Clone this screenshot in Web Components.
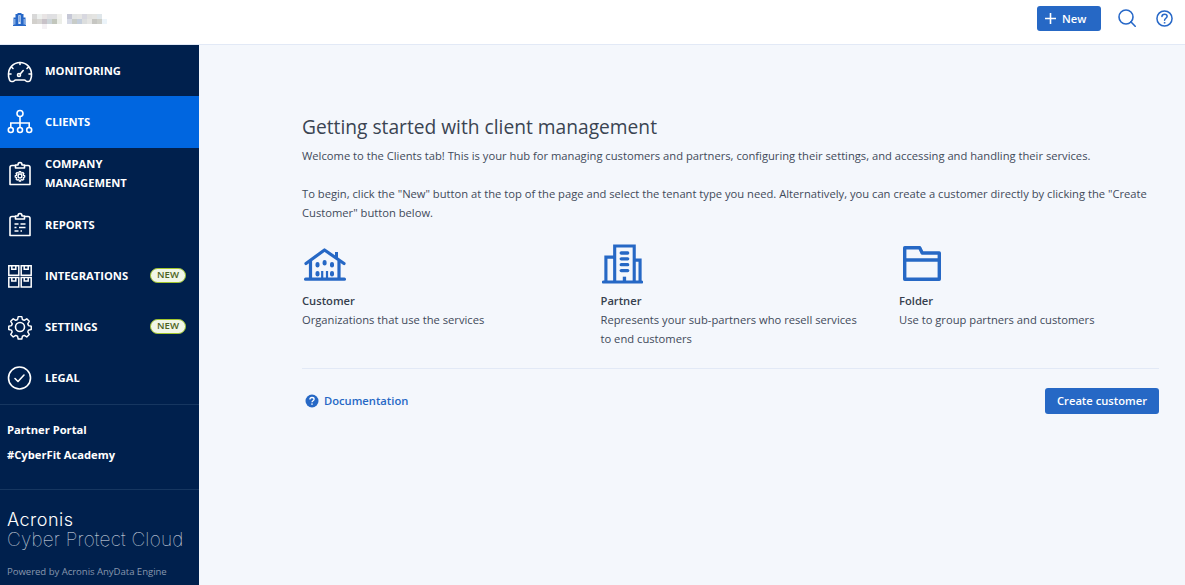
<!DOCTYPE html>
<html lang="en">
<head>
<meta charset="utf-8">
<title>Clients</title>
<style>
html,body{margin:0;padding:0;height:100%;overflow:hidden}
body{font-family:"Open Sans","Noto Sans",sans-serif;background:#f4f7fc}
</style>
</head>
<body>
<template id="t-shell">
<style>
:host{display:grid;grid-template-columns:199px 1fr;grid-template-rows:45px 1fr;width:1185px;height:585px;overflow:hidden}
::slotted(app-header){grid-column:1 / 3}
</style>
<slot></slot>
</template>

<template id="t-header">
<style>
:host{display:flex;align-items:center;background:#fff;border-bottom:1px solid #e2e9f6;box-sizing:border-box;height:45px;padding:0 12px 8px 13px}
.tenant{width:13px;height:13px;margin-right:6px;margin-top:3px}
.blur{display:grid;grid-template-columns:repeat(15,5px);grid-auto-rows:5px;margin-top:7px}
.blur i{display:block}
.sp{flex:1}
.s{margin-left:17px;width:18px;height:18px;display:block}
.h{margin-left:20px;width:17px;height:17px;display:block}
.add{width:15px;height:15px;margin-right:4px}
</style>
<svg class="tenant" viewBox="0 0 13 13"><path fill="#2768c8" d="M0 13v-1h.5V4.500h2V.9h2V0h4v.9h2v3.600h2V12h.5v1z"/><path fill="#bcd2f0" d="M1.400 6h.9v5.500h-.9zM10.700 6h.9v5.500h-.9z"/><path fill="#e4eefa" d="M5.300 2.300h2.400v8.700H5.300z"/><path fill="#2768c8" d="M5.800 3.500h1.400v1H5.800zM5.800 5.500h1.400v1H5.800zM5.800 7.500h1.400v1H5.800z"/></svg>
<div class="blur" id="blur"></div>
<span class="sp"></span>
<app-button compact>
<svg class="add" slot="icon" viewBox="0 0 15 15" stroke="#fff" stroke-width="1.6" fill="none"><path d="M7.500 2v11M2 7.500h11"/></svg>New</app-button>
<svg class="s" viewBox="0 0 18 18" fill="none" stroke="#2768c8" stroke-width="1.600"><circle cx="8" cy="8" r="7"/><path d="M12.800 12.800l4.400 4.400" stroke-linecap="round"/></svg>
<svg class="h" viewBox="0 0 18 18" fill="none" stroke="#2768c8" stroke-width="1.6"><circle cx="9" cy="9" r="8"/><path d="M6.300 7c0-1.600 1.200-2.600 2.800-2.600 1.500 0 2.700 1 2.700 2.300 0 2-2.700 2.100-2.700 4.200" stroke-linecap="round"/><path d="M9.100 12.800v1.500" stroke-width="1.700"/></svg>
</template>

<template id="t-sidebar">
<style>
:host{display:flex;flex-direction:column;background:#00204d;color:#fff;min-height:0}
.nav{display:flex;flex-direction:column;padding-bottom:1px}
.links{border-top:1px solid #163660;border-bottom:1px solid #163660;height:86px;box-sizing:border-box;padding:16px 7px 0;display:flex;flex-direction:column;gap:7px;font-size:11.2px;font-weight:700;line-height:18px}
.brand{padding:20px 7px 0;flex:1}
.a{font:300 18px/20px "Inter",sans-serif;letter-spacing:.5px;color:#fff}
.c{font:100 19px/21px "Inter",sans-serif;color:#e6ebf2;white-space:nowrap;letter-spacing:.22px;margin-top:-1px}
.p{font-size:9.6px;line-height:14px;color:#8797ae;margin-top:15px;white-space:nowrap;letter-spacing:-.05px}
</style>
<div class="nav"><slot></slot></div>
<div class="links"><span>Partner Portal</span><span>#CyberFit Academy</span></div>
<div class="brand">
<div class="a">Acronis</div>
<div class="c">Cyber Protect Cloud</div>
<div class="p">Powered by Acronis AnyData Engine</div>
</div>
</template>

<template id="t-item">
<style>
:host{display:flex;align-items:center;height:51px;box-sizing:border-box;padding:0 13px 0 7px;color:#fff;flex:none}
:host([active]){background:#0066e0;height:52px}
:host([active]) .l{margin-top:-2px}
:host([two-line]) .l{margin-top:-2px}
.i{width:26px;height:26px;margin-right:12px;flex:none;display:flex}
.l{font-size:11.2px;font-weight:700;line-height:19px;flex:1;letter-spacing:0}
</style>
<span class="i"><slot name="icon"></slot></span>
<span class="l"><slot></slot></span>
<slot name="badge"></slot>
</template>

<template id="t-badge">
<style>
:host{display:block;box-sizing:border-box;width:36px;height:15px;border-radius:8px;background:#f1f6e7;border:1.5px solid #a2c62c;color:#4d6322;font-size:9.6px;font-weight:600;line-height:12px;text-align:center}
</style>
<slot></slot>
</template>

<template id="t-button">
<style>
:host{display:inline-flex;align-items:center;justify-content:center;background:#2668c5;color:#fff;border-radius:3px;height:25px;box-sizing:border-box;padding:0 14px;font-size:11.2px;font-weight:600;white-space:nowrap}
:host([compact]){width:64px;padding:0 0 0 6px;height:25px;justify-content:flex-start}
</style>
<slot name="icon"></slot><slot></slot>
</template>

<template id="t-card">
<style>
:host{display:flex;flex-direction:column;color:#3f4a5a;font-size:11.2px;line-height:19px}
.ic{height:40px;margin-bottom:7px;display:flex;align-items:flex-end}
.t{font-weight:600;color:#36404e}
</style>
<div class="ic"><slot name="icon"></slot></div>
<div class="t"><slot name="title"></slot></div>
<div><slot></slot></div>
</template>

<template id="t-main">
<style>
:host{display:block;padding:71px 26px 0 103px;color:#3f4a5a;font-size:11.2px;line-height:19px;min-width:0}
h1{margin:0 0 8px;font-size:19.2px;font-weight:400;line-height:22px;color:#3a4452}
p{margin:0}
p+p{margin-top:19px}
.cards{display:grid;grid-template-columns:298.5px 298.5px 1fr;margin-top:22px;height:124px}
.foot{border-top:1px solid #e2e9f6;display:flex;align-items:center;justify-content:space-between;padding-top:19px;margin-top:0}
.doc{display:flex;align-items:center;color:#2668c5;font-weight:600;margin-left:3px;margin-top:-1px}
.doc svg{width:14px;height:14px;margin-right:5px}
</style>
<h1>Getting started with client management</h1>
<p>Welcome to the Clients tab! This is your hub for managing customers and partners, configuring their settings, and accessing and handling their services.</p>
<p>To begin, click the "New" button at the top of the page and select the tenant type you need. Alternatively, you can create a customer directly by clicking the "Create Customer" button below.</p>
<div class="cards"><slot></slot></div>
<div class="foot">
<span class="doc"><svg viewBox="0 0 14 14"><circle cx="7" cy="7" r="6.500" fill="#2668c5"/><path d="M4.900 5.400c0-1.200.9-1.900 2.100-1.900s2.100.7 2.100 1.700c0 1.500-2.100 1.500-2.100 3" fill="none" stroke="#fff" stroke-width="1.300"/><rect x="6.300" y="9.400" width="1.400" height="1.400" fill="#fff"/></svg>Documentation</span>
<app-button style="width:114px;height:26px;padding:0 0 2px">Create customer</app-button>
</div>
</template>

<app-shell>
<app-header></app-header>
<app-sidebar>
<nav-item>
<svg slot="icon" viewBox="0 0 26 26" fill="none" stroke="#fff" stroke-width="1.600" stroke-linecap="round" stroke-linejoin="round"><path d="M6 23.500H4.600c-1 0-1.700-.5-2-1.400A12 12 0 0 1 1.500 16a11.500 11.500 0 0 1 23 0 12 12 0 0 1-1.100 6.100c-.3.9-1 1.400-2 1.400H20c-1 0-1.500-1.500-2.500-1.500h-9c-1 0-1.500 1.500-2.500 1.500z"/><circle cx="12" cy="17" r="1.500"/><path d="M13.200 16l3-3.500M13 4.500v2M4.500 9l1.500 1.500M21.500 9L20 10.500M2 16h2M22 16h2"/></svg>
MONITORING</nav-item>
<nav-item active>
<svg slot="icon" viewBox="0 0 26 26" fill="none" stroke="#fff" stroke-width="1.600"><circle cx="13" cy="4.500" r="3"/><circle cx="3.800" cy="21" r="2.500"/><circle cx="13" cy="21" r="2.500"/><circle cx="22.200" cy="21" r="2.500"/><path d="M13 7.500v11M3.800 18.500V14h18.400v4.500"/></svg>
CLIENTS</nav-item>
<nav-item two-line>
<svg slot="icon" viewBox="0 0 26 26" fill="none" stroke="#fff" stroke-width="1.600" stroke-linejoin="round"><path d="M8.500 4.500H5a2 2 0 0 0-2 2v17h20v-17a2 2 0 0 0-2-2h-3.500"/><path d="M8.500 7V4h2.500c0-1.500.8-2.500 2-2.500s2 1 2 2.500h2.500v3z"/><g transform="translate(7.500 9.500) scale(.42)" stroke-width="3.400"><circle cx="13" cy="13" r="4.500"/><path d="M11 1.500h4l.7 3.200 2 .9 2.800-1.700 2.800 2.800-1.700 2.800.9 2 3 .7v3.600l-3 .7-.9 2 1.700 2.800-2.800 2.800-2.800-1.700-2 .9-.7 3h-4l-.7-3-2-.9-2.800 1.700-2.800-2.800 1.700-2.800-.9-2-3-.7v-3.600l3-.7.9-2-1.700-2.800 2.800-2.800 2.800 1.700 2-.9z" transform="translate(1.300 1.300) scale(.9)"/></g></svg>
<span>COMPANY<br>MANAGEMENT</span></nav-item>
<nav-item>
<svg slot="icon" viewBox="0 0 26 26" fill="none" stroke="#fff" stroke-width="1.600" stroke-linejoin="round"><path d="M8.500 4.500H5a2 2 0 0 0-2 2v17h20v-17a2 2 0 0 0-2-2h-3.500"/><path d="M8.500 7V4h2.500c0-1.500.8-2.500 2-2.500s2 1 2 2.500h2.500v3z"/><path d="M7.500 12h4M13.500 12h5M7.500 15.500h2M12 15.500h6.500M7.500 19h4M13.500 19h1.500" stroke-width="1.400"/></svg>
REPORTS</nav-item>
<nav-item>
<svg slot="icon" viewBox="0 0 26 26" fill="none" stroke="#fff" stroke-width="1.500"><path d="M1.800 2.800h10v9.500h-10zM14.200 2.800h10v9.500h-10zM1.800 14.500h10V24h-10zM14.200 14.500h10V24h-10z"/><path d="M4.800 2.800v3.500h4V2.800M17.200 2.800v3.500h4V2.800M4.800 14.500V18h4v-3.500M17.200 14.500V18h4v-3.500"/></svg>
INTEGRATIONS<new-badge slot="badge">NEW</new-badge></nav-item>
<nav-item>
<svg slot="icon" viewBox="0 0 26 26" fill="none" stroke="#fff" stroke-width="1.600" stroke-linejoin="round"><circle cx="13" cy="13" r="4.500"/><path d="M11 1.500h4l.7 3.200 2 .9 2.800-1.700 2.800 2.800-1.700 2.800.9 2 3 .7v3.600l-3 .7-.9 2 1.700 2.800-2.800 2.800-2.800-1.700-2 .9-.7 3h-4l-.7-3-2-.9-2.800 1.700-2.800-2.800 1.700-2.800-.9-2-3-.7v-3.600l3-.7.9-2-1.700-2.800 2.800-2.800 2.800 1.700 2-.9z" transform="translate(1.300 1.300) scale(.9)"/></svg>
SETTINGS<new-badge slot="badge">NEW</new-badge></nav-item>
<nav-item>
<svg slot="icon" viewBox="0 0 26 26" fill="none" stroke="#fff" stroke-width="1.600"><circle cx="12.500" cy="13" r="11"/><path d="M8 13.500l3 3 6-6.500" stroke-linecap="round" stroke-linejoin="round"/></svg>
LEGAL</nav-item>
</app-sidebar>
<main-content>
<feature-card>
<svg slot="icon" style="margin:0 0 3px 2px" width="42" height="33" viewBox="0 0 42 33" fill="none" stroke="#2668c5" stroke-width="3.200"><path d="M2 15.500L20.500 2 40 15.500" stroke-linejoin="round" stroke-linecap="round"/><path d="M32.500 4v6" stroke-width="3"/><path d="M6.500 13v18M35 13v18"/><path d="M1.600 31.200h38.800" stroke-linecap="round"/><path d="M18.200 31v-8M23 31v-8" stroke-width="2.200"/><g stroke="none" fill="#2668c5"><rect x="11.500" y="14" width="4" height="5.500" rx="2"/><rect x="18.600" y="12" width="4" height="5.500" rx="2"/><rect x="26" y="14" width="4" height="5.500" rx="2"/><rect x="11.500" y="23" width="4" height="5.500" rx="2"/><rect x="26" y="23" width="4" height="5.500" rx="2"/></g></svg>
<span slot="title">Customer</span>Organizations that use the services</feature-card>
<feature-card>
<svg slot="icon" style="margin-left:1.500px" width="41" height="40" viewBox="0 0 42 40" fill="none" stroke="#2668c5" stroke-width="3.200"><path d="M1.500 38.400h39" stroke-linecap="round"/><path d="M13 38V1.600h20V38M13 13H4v25M33 16h6v22"/><g stroke="none" fill="#2668c5"><rect x="18" y="7" width="10" height="3.400" rx="1.700"/><rect x="18" y="13" width="10" height="3.400" rx="1.700"/><rect x="18" y="19" width="10" height="3.400" rx="1.700"/><rect x="18" y="25" width="10" height="3.400" rx="1.700"/><rect x="21.300" y="33" width="3.400" height="5"/></g></svg>
<span slot="title">Partner</span>Represents your sub-partners who resell services<br>to end customers</feature-card>
<feature-card>
<svg slot="icon" style="margin:0 0 3px 4px" width="38" height="35" viewBox="0 0 38 35" fill="none" stroke="#2668c5" stroke-width="3.400" stroke-linejoin="round"><path d="M1.700 1.700h15l2.500 5.300h17.100v26.300H1.700z"/><path d="M1.700 14h34.600"/></svg>
<span slot="title">Folder</span>Use to group partners and customers</feature-card>
</main-content>
</app-shell>

<script>
function def(name, tid, after){
  customElements.define(name, class extends HTMLElement{
    constructor(){super();const r=this.attachShadow({mode:'open'});r.appendChild(document.getElementById(tid).content.cloneNode(true));if(after)after(r);}
  });
}
def('app-shell','t-shell');
def('app-button','t-button');
def('new-badge','t-badge');
def('nav-item','t-item');
def('app-sidebar','t-sidebar');
def('feature-card','t-card');
def('main-content','t-main');
def('app-header','t-header',function(r){
  var rows=[
   ['#d8d8d8','#edf0ee','#e8e4e4','#dfdfe2','#e0e0e2','#f0f0ec','#fff','#c6c8d6','#e2e4e4','#e6e6e4','#d8d8e0','#e2e2e0','#e4e4e2','#dfe6ea','#fff'],
   ['#d2d0cc','#d8d6d4','#c8c2c8','#ccd4d8','#c2c6bc','#eceee8','#fff','#d6dae6','#c8ccc8','#c4cedc','#dcdede','#e6e6e4','#c6c6c2','#cfd0ca','#ecf4fa'],
   ['#fff','#fff','#f4f1f4','#fff','#fff','#fff','#fff','#fff','#fff','#fff','#fff','#fff','#fff','#fff','#fff']
  ];
  var b=r.getElementById('blur');
  rows.forEach(function(row){row.forEach(function(c){var i=document.createElement('i');i.style.background=c;b.appendChild(i);});});
});
</script>
</body>
</html>
